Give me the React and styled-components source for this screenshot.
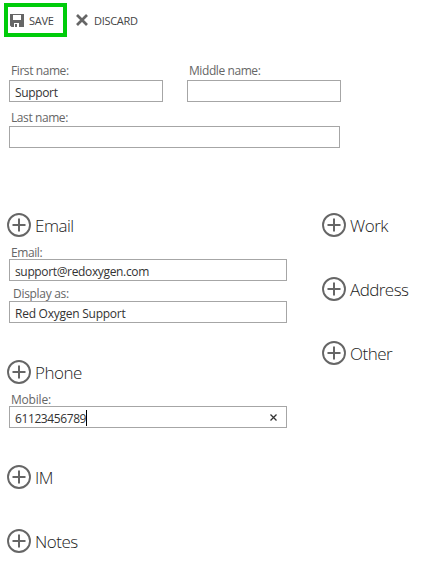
import styled, { createGlobalStyle } from 'styled-components'

function AddIcon() {
  return (
    <svg width="24" height="24" viewBox="0 0 24 24" fill="none" stroke="#666">
      <circle cx="12" cy="12" r="11" strokeWidth="1.9" />
      <path d="M5.5 12h13M12 5.5v13" strokeWidth="2" />
    </svg>
  )
}

function Section({ title, spacing, children, ...rest }) {
  return (
    <Group {...rest}>
      <SectionHead>
        <AddIcon />
        <SectionTitle $spacing={spacing}>{title}</SectionTitle>
      </SectionHead>
      {children}
    </Group>
  )
}

function Field({
  label,
  value,
  width,
  top,
  gap = 0,
  indent = 2,
  spacing,
  labelSpacing,
  active,
}) {
  return (
    <FieldBox $width={width} $top={top}>
      <Label $gap={gap} $indent={indent} $spacing={labelSpacing}>
        {label}
      </Label>
      <InputBox>
        <Value $spacing={spacing}>{value}</Value>
        {active && <Caret />}
        {active && (
          <Clear width="7" height="7" viewBox="0 0 7 7">
            <path d="M0.5 0.5l6 6M6.5 0.5l-6 6" stroke="#333" strokeWidth="1.3" />
          </Clear>
        )}
      </InputBox>
    </FieldBox>
  )
}

function App() {
  return (
    <>
      <GlobalStyle />
      <Page>
        <Toolbar>
          <SaveButton>
            <svg width="14" height="13" viewBox="0 0 14 13">
              <path
                d="M0 0h14v13H1.5L0 11.5zM3 1v5h8V1zM4 9v4h5V9z"
                fill="#666"
                fillRule="evenodd"
              />
              <path d="M5 10h2v3H5z" fill="#666" />
            </svg>
            <Action $spacing={-0.25}>SAVE</Action>
          </SaveButton>
          <DiscardButton>
            <svg width="12" height="12" viewBox="0 0 12 12">
              <path d="M1 1l10 10M11 1L1 11" stroke="#666" strokeWidth="2.7" />
            </svg>
            <Action $spacing={-0.3}>DISCARD</Action>
          </DiscardButton>
        </Toolbar>
        <Names>
          <NameRow>
            <Field
              label="First name:"
              value="Support"
              width={154}
              gap={1}
              spacing={-0.35}
            />
            <Field label="Middle name:" width={154} gap={1} />
          </NameRow>
          <Field label="Last name:" width={331} top={8} />
        </Names>
        <Columns>
          <Column>
            <Section title="Email" $height={147}>
              <Field
                label="Email:"
                value="support@redoxygen.com"
                width={278}
                top={8}
                gap={-2}
                spacing={-0.35}
              />
              <Field
                label="Display as:"
                value="Red Oxygen Support"
                width={278}
                top={5}
                gap={-1}
                indent={4}
                spacing={-0.25}
                labelSpacing={-0.3}
              />
            </Section>
            <Section title="Phone" $height={105}>
              <Field
                label="Mobile:"
                value="61123456789"
                width={278}
                top={8}
                gap={-2}
                spacing={-0.4}
                labelSpacing={-0.2}
                active
              />
            </Section>
            <Section title="IM" $height={64} />
            <Section title="Notes" $height={24} />
          </Column>
          <Column>
            <Section title="Work" $height={64} />
            <Section title="Address" $height={64} spacing={-0.55} />
            <Section title="Other" $height={64} spacing={-0.5} />
          </Column>
        </Columns>
      </Page>
    </>
  )
}

const GlobalStyle = createGlobalStyle`
  * {
    box-sizing: border-box;
  }
  body {
    margin: 0;
    background: #fff;
    font-family: 'Open Sans', 'Noto Sans', sans-serif;
  }
  svg {
    display: block;
    flex-shrink: 0;
  }
`

const Page = styled.div`
  width: 421px;
  height: 577px;
  overflow: hidden;
  background: #fff;
`
const Toolbar = styled.div`
  display: flex;
  padding: 3px 0 0 4px;
`
const ToolButton = styled.button`
  display: flex;
  align-items: center;
  height: 34px;
  background: none;
  font-family: inherit;
`
const SaveButton = styled(ToolButton)`
  width: 63px;
  gap: 5px;
  padding: 0 0 0 2px;
  border: 4px solid #00cc0a;
`
const DiscardButton = styled(ToolButton)`
  gap: 6px;
  padding: 0 0 0 9px;
  border: 0;
`
const Action = styled.span`
  padding-top: 1px;
  font-size: 11px;
  line-height: 16px;
  letter-spacing: ${({ $spacing }) => $spacing}px;
  color: #444;
`
const Names = styled.div`
  height: 176px;
  padding: 26px 0 0 9px;
`
const NameRow = styled.div`
  display: flex;
  gap: 24px;
`
const FieldBox = styled.div`
  width: ${({ $width }) => $width}px;
  padding-top: ${({ $top = 0 }) => $top}px;
`
const Label = styled.div`
  margin-bottom: ${({ $gap }) => $gap}px;
  padding-left: ${({ $indent }) => $indent}px;
  font-size: 12px;
  line-height: 16px;
  letter-spacing: ${({ $spacing = -0.42 }) => $spacing}px;
  color: #666;
`
const InputBox = styled.div`
  display: flex;
  height: 22px;
  padding: 3px 9px 0 5px;
  border: 1px solid #a6a6a6;
`
const Value = styled.span`
  font-size: 12px;
  line-height: 18px;
  letter-spacing: ${({ $spacing = -0.15 }) => $spacing}px;
  color: #333;
`
const Caret = styled.i`
  width: 1px;
  height: 16px;
  background: #000;
`
const Clear = styled.svg`
  margin: 4px 0 0 auto;
`
const Columns = styled.div`
  display: flex;
  padding-left: 7px;
`
const Column = styled.div`
  flex: 0 0 315px;
`
const Group = styled.section`
  height: ${({ $height }) => $height}px;

  ${FieldBox} {
    margin-left: 2px;
  }
`
const SectionHead = styled.div`
  display: flex;
  gap: 4px;
  height: 24px;
`
const SectionTitle = styled.h2`
  margin: 1px 0 0;
  font-size: 17px;
  font-weight: 300;
  line-height: 24px;
  letter-spacing: ${({ $spacing = -0.5 }) => $spacing}px;
  color: #222;
`

export default App
